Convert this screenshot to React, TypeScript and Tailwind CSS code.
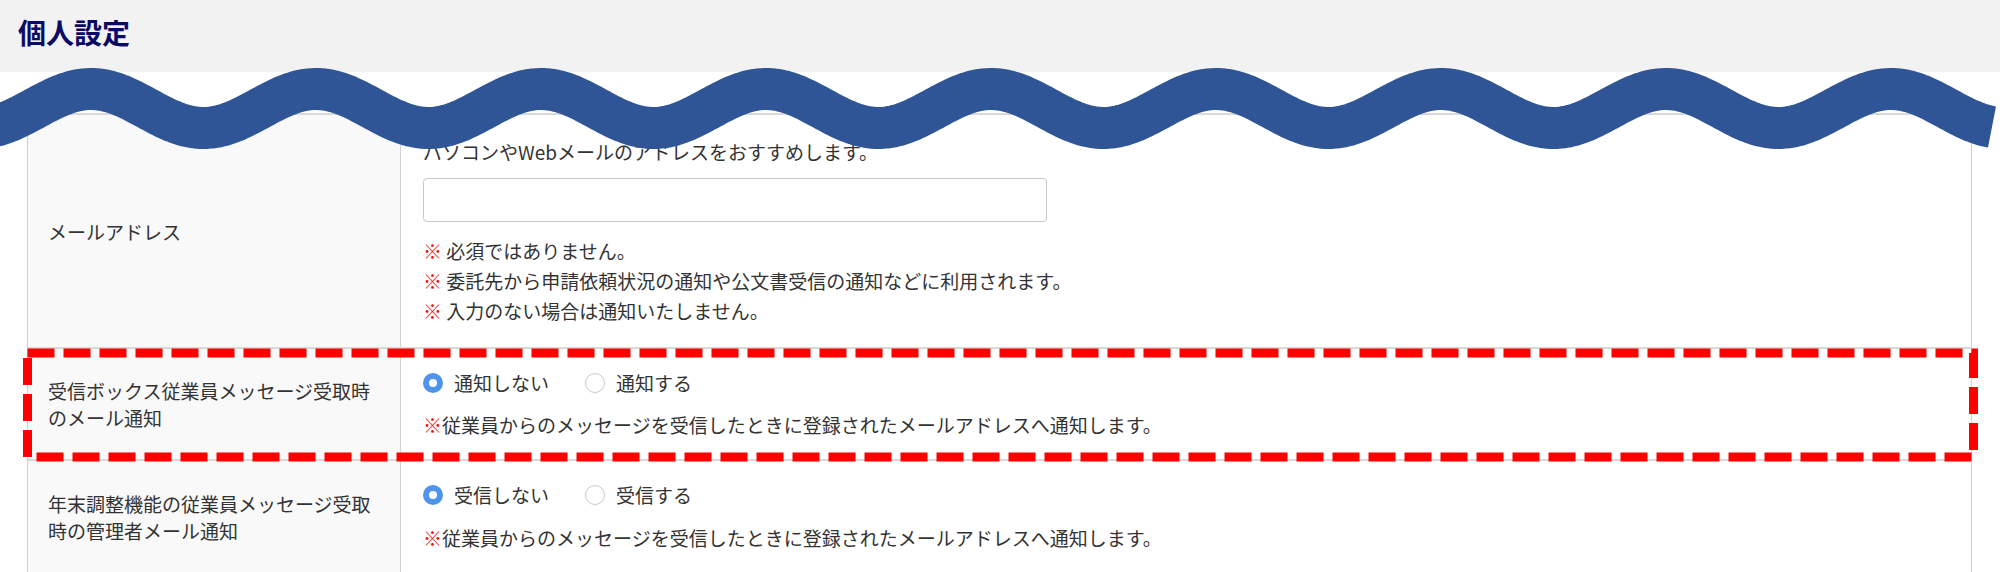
import React from 'react'

// wavy band drawn over the top of the table (annotation)
const WAVE_PATH = (() => {
  const pts: string[] = []
  for (let x = -60; x <= 1994; x += 3) {
    const y = 108.5 - 19.5 * Math.cos((2 * Math.PI * (x - 91)) / 225)
    pts.push(`${x},${y.toFixed(2)}`)
  }
  return 'M' + pts.join(' L')
})()

function Radio({ checked, label }: { checked?: boolean; label: string }) {
  return (
    <label className="flex items-center gap-[11px]">
      {checked ? (
        <span className="w-5 h-5 rounded-full border-[6px] border-[#4d94ea] bg-white shrink-0" />
      ) : (
        <span className="w-5 h-5 rounded-full border border-[#c9c9c9] bg-white shrink-0" />
      )}
      <span>{label}</span>
    </label>
  )
}

function Note({ children, spaced }: { children: React.ReactNode; spaced?: boolean }) {
  return (
    <p className="leading-[30px]">
      <span className="text-[#f01010] font-bold">※</span>
      {spaced ? ' ' : ''}
      {children}
    </p>
  )
}

function Row({ label, children, className }: { label: React.ReactNode; children: React.ReactNode; className?: string }) {
  return (
    <div className="grid grid-cols-[373px_1fr] border-t-2 border-[#d9d9d9]">
      <div className="bg-[#f9f9f9] border-r border-[#d2d2d2] px-[20px] flex items-center leading-[27px]">
        {label}
      </div>
      <div className={'pl-[22px] ' + (className ?? '')}>{children}</div>
    </div>
  )
}

export default function App() {
  return (
    <div className="relative w-[2000px] h-[572px] overflow-hidden bg-white text-[19px] text-[#333] font-['Noto_Sans_CJK_JP','Noto_Sans',sans-serif]">
      <header className="h-[72px] bg-[#f2f2f2] flex items-center pl-[18px] pb-[8px]">
        <h1 className="text-[28px] font-bold leading-none text-[#0b0b63]">個人設定</h1>
      </header>

      <div className="pl-[27px] pr-[28px] pt-[41px]">
        <div className="border-x border-[#cfcfcf] border-b-2 border-b-[#d9d9d9]">
          <Row label="メールアドレス" className="pt-[23px] pb-[21px]">
            <p className="leading-[28px]">パソコンやWebメールのアドレスをおすすめします。</p>
            <input
              type="text"
              className="mt-[12px] block w-[624px] h-[44px] rounded-[4px] border border-[#c8c8c8] bg-white px-3 outline-none"
            />
            <div className="mt-[14px]">
              <Note spaced>必須ではありません。</Note>
              <Note spaced>委託先から申請依頼状況の通知や公文書受信の通知などに利用されます。</Note>
              <Note spaced>入力のない場合は通知いたしません。</Note>
            </div>
          </Row>

          <Row
            label={<span>受信ボックス従業員メッセージ受取時のメール通知</span>}
            className="pt-[20px] pb-[19px]"
          >
            <div className="flex items-center gap-[36px] leading-[28px]">
              <Radio checked label="通知しない" />
              <Radio label="通知する" />
            </div>
            <div className="mt-[13px]">
              <Note>従業員からのメッセージを受信したときに登録されたメールアドレスへ通知します。</Note>
            </div>
          </Row>

          <Row
            label={<span>年末調整機能の従業員メッセージ受取時の管理者メール通知</span>}
            className="pt-[20px] pb-[19px]"
          >
            <div className="flex items-center gap-[36px] leading-[28px]">
              <Radio checked label="受信しない" />
              <Radio label="受信する" />
            </div>
            <div className="mt-[14px]">
              <Note>従業員からのメッセージを受信したときに登録されたメールアドレスへ通知します。</Note>
            </div>
          </Row>
        </div>
      </div>

      {/* annotations drawn on top of the screenshot */}
      <svg className="absolute left-0 top-0 pointer-events-none" width="2000" height="572" viewBox="0 0 2000 572">
        <path d={WAVE_PATH} fill="none" stroke="#2f5597" strokeWidth="42" strokeLinecap="butt" strokeLinejoin="round" />
        <rect
          x="27.5"
          y="353"
          width="1946"
          height="104"
          fill="none"
          stroke="#ff0000"
          strokeWidth="9"
          strokeDasharray="27 9"
        />
      </svg>
    </div>
  )
}
